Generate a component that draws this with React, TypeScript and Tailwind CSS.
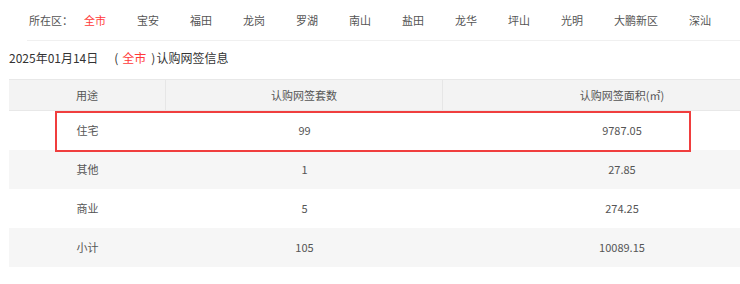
const districts = ['全市', '宝安', '福田', '龙岗', '罗湖', '南山', '盐田', '龙华', '坪山', '光明', '大鹏新区', '深汕']

const rows = [
  { use: '住宅', count: '99', area: '9787.05' },
  { use: '其他', count: '1', area: '27.85' },
  { use: '商业', count: '5', area: '274.25' },
  { use: '小计', count: '105', area: '10089.15' },
]

export default function App() {
  return (
    <div
      className="w-[740px] h-[284px] overflow-hidden bg-white text-[#555]"
      style={{ fontFamily: '"Noto Sans CJK SC", "Noto Sans", sans-serif' }}
    >
      {/* district filter */}
      <div className="ml-[27px] h-[41px] border-b border-[#f0f0f0] flex items-center pl-[2px] pt-[1px] text-[11px] whitespace-nowrap">
        <span className="mr-[11px] w-[44px]">所在区：</span>
        {districts.map((d, i) => (
          <span key={d} className={`mr-[31px] ${i === 0 ? 'text-[#ff3a3a]' : 'text-[#555]'}`}>
            {d}
          </span>
        ))}
      </div>

      {/* title */}
      <div className="pl-[9px] h-[38px] pb-[4px] flex items-center text-[12px] text-[#333] whitespace-nowrap">
        <span>2025年01月14日</span>
        <span className="ml-[16px] mr-[4px]">(</span>
        <span className="text-[#ff3a3a]">全市</span>
        <span className="ml-[5px] mr-[1px]">)</span>
        <span>认购网签信息</span>
      </div>

      {/* table */}
      <div className="relative ml-[9px] w-[792px] text-[11px]">
        <div className="flex h-[32px] bg-[#f3f3f3] border-y border-[#e8e8e8]">
          <div className="w-[157px] border-r border-[#e6e6e6] flex items-center justify-center">用途</div>
          <div className="w-[277px] border-r border-[#e6e6e6] flex items-center justify-center">认购网签套数</div>
          <div className="flex-1 flex items-center justify-center">认购网签面积(㎡)</div>
        </div>
        {rows.map((r, i) => (
          <div key={r.use} className={`flex h-[39px] ${i % 2 === 1 ? 'bg-[#f6f6f6]' : 'bg-white'}`}>
            <div className="w-[157px] flex items-center justify-center">{r.use}</div>
            <div className="w-[277px] flex items-center justify-center">{r.count}</div>
            <div className="flex-1 flex items-center justify-center">{r.area}</div>
          </div>
        ))}
        <div className="absolute left-[46px] top-[32px] w-[636px] h-[41px] border-2 border-[#f03e3e]" />
      </div>
    </div>
  )
}
